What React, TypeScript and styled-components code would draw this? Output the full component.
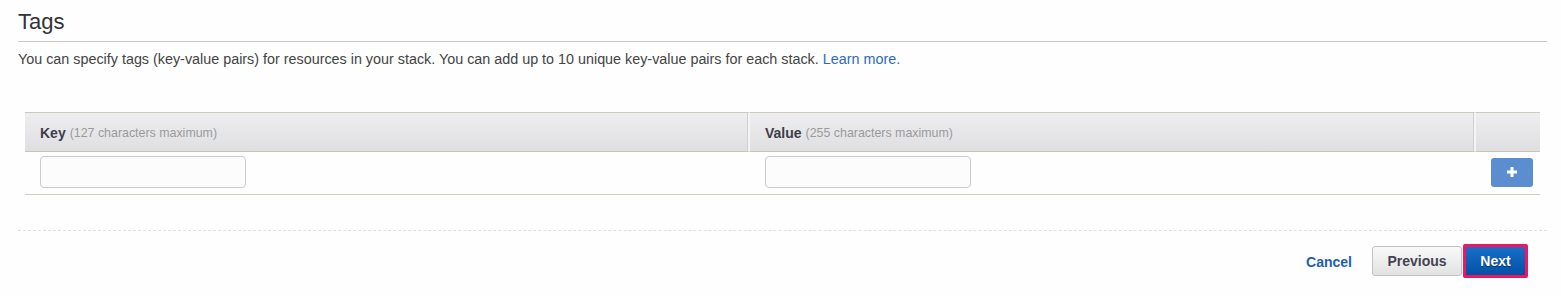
import styled, { createGlobalStyle } from "styled-components";

const Global = createGlobalStyle`
  body {
    margin: 0;
    background: #fdfefd;
    font-family: "Liberation Sans", Arial, sans-serif;
    color: #444;
  }
`;

const Page = styled.div`
  padding: 0 14px 0 18px;
  height: 296px;
  box-sizing: border-box;
  overflow: hidden;
`;

const Title = styled.h2`
  margin: 0;
  padding-top: 9px;
  height: 32px;
  font-size: 22px;
  font-weight: normal;
  line-height: 26px;
  color: #333;
  border-bottom: 1px solid #c8c8c8;
`;

const Intro = styled.p`
  margin: 9px 0 0;
  font-size: 14.35px;
  line-height: 17px;
  color: #444;
`;

const Link = styled.a`
  color: #2e6bbd;
  text-decoration: none;
`;

const TagTable = styled.div`
  margin: 44px 7px 0;
  display: grid;
  grid-template-columns: 725px 726px 1fr;
`;

const HeadCell = styled.div<{ $last?: boolean }>`
  height: 40px;
  box-sizing: border-box;
  border-top: 1px solid #cfc9bc;
  border-bottom: 1px solid #c9c4b8;
  border-right: ${(p) => (p.$last ? "none" : "2px solid #f4f4f4")};
  box-shadow: ${(p) => (p.$last ? "none" : "inset -1px 0 0 #d0d0d0")};
  background: linear-gradient(#eeeef0, #dfdfe1);
  display: flex;
  align-items: center;
  padding-left: 15px;
  padding-top: 2px;
  font-size: 14px;
`;

const HeadLabel = styled.b`
  color: #3d3d48;
  margin-right: 4px;
`;

const Hint = styled.span`
  color: #9a9a9a;
  font-size: 12.4px;
`;

const BodyCell = styled.div<{ $align?: "start" | "end" }>`
  height: 43px;
  box-sizing: border-box;
  border-bottom: 1px solid #d4cec1;
  display: flex;
  align-items: center;
  justify-content: ${(p) => (p.$align === "end" ? "flex-end" : "flex-start")};
  padding: 0 7px 2px 15px;
`;

const TextInput = styled.input`
  width: 206px;
  height: 32px;
  box-sizing: border-box;
  border: 1px solid #cccccc;
  border-radius: 4px;
  background: #fcfcfc;
`;

const AddButton = styled.button`
  width: 42px;
  height: 29px;
  border: none;
  border-radius: 3px;
  background: #5b8dcf;
  display: flex;
  align-items: center;
  justify-content: center;
  padding: 0;
`;

const Footer = styled.div`
  margin-top: 35px;
  border-top: 1px dashed #e0e0e0;
  display: flex;
  justify-content: flex-end;
  align-items: center;
  gap: 1px;
  padding: 13px 19px 0 0;
`;

const CancelLink = styled.a`
  color: #1f5fb0;
  font-size: 14px;
  font-weight: bold;
  margin-right: 19px;
  padding-top: 1px;
`;

const SecondaryButton = styled.button`
  width: 90px;
  height: 30px;
  border: 1px solid #c2c2c2;
  border-radius: 3px;
  background: linear-gradient(#f9f9f9, #e2e2e2);
  font-family: inherit;
  font-size: 14px;
  font-weight: bold;
  color: #444450;
`;

const PrimaryButton = styled.button`
  width: 65px;
  height: 34px;
  border: 3px solid #f0155e;
  border-radius: 2px;
  background: linear-gradient(#1a6ec6, #0152a6);
  font-family: inherit;
  font-size: 14px;
  font-weight: bold;
  color: #fff;
  text-shadow: 0 1px 1px rgba(0, 0, 0, 0.5);
`;

function App() {
  return (
    <>
      <Global />
      <Page>
        <Title>Tags</Title>
        <Intro>
          You can specify tags (key-value pairs) for resources in your stack.
          You can add up to 10 unique key-value pairs for each stack.{" "}
          <Link href="#">Learn more.</Link>
        </Intro>

        <TagTable>
          <HeadCell>
            <HeadLabel>Key</HeadLabel>
            <Hint>(127 characters maximum)</Hint>
          </HeadCell>
          <HeadCell>
            <HeadLabel>Value</HeadLabel>
            <Hint>(255 characters maximum)</Hint>
          </HeadCell>
          <HeadCell $last />

          <BodyCell>
            <TextInput />
          </BodyCell>
          <BodyCell>
            <TextInput />
          </BodyCell>
          <BodyCell $align="end">
            <AddButton>
              <svg width="10" height="10" viewBox="0 0 10 10">
                <path d="M3.5 0h3v3.5H10v3H6.5V10h-3V6.5H0v-3h3.5z" fill="#fff" />
              </svg>
            </AddButton>
          </BodyCell>
        </TagTable>

        <Footer>
          <CancelLink>Cancel</CancelLink>
          <SecondaryButton>Previous</SecondaryButton>
          <PrimaryButton>Next</PrimaryButton>
        </Footer>
      </Page>
    </>
  );
}

export default App;
